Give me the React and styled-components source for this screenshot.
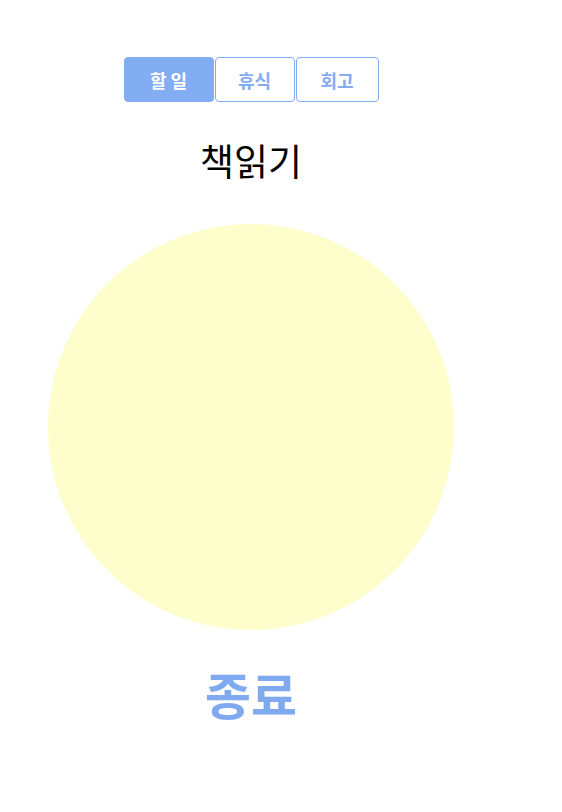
import React, { useState } from "react";
import styled, { createGlobalStyle } from "styled-components";

const Global = createGlobalStyle`
  body {
    margin: 8px;
    background: #ffffff;
    font-family: "Noto Sans CJK KR", "Noto Sans", sans-serif;
  }
`;

const Page = styled.div`
  width: 486px;
  display: flex;
  flex-direction: column;
  align-items: center;
  padding-top: 49px;
`;

const Tabs = styled.div`
  display: flex;
  gap: 1px;
`;

const Tab = styled.button`
  height: 45px;
  width: ${(p) => p.$w}px;
  border: 1px solid #82adf2;
  border-radius: 4px;
  background: ${(p) => (p.$active ? "#82adf2" : "#ffffff")};
  color: ${(p) => (p.$active ? "#ffffff" : "#82adf2")};
  font-family: "Noto Sans CJK KR", sans-serif;
  font-weight: 700;
  font-size: 18px;
  padding: 0;
  cursor: pointer;
`;

const Title = styled.h1`
  margin: 32px 0 0;
  font-size: 37px;
  font-weight: 400;
  line-height: 52px;
  color: #000;
`;

const Circle = styled.div`
  margin-top: 38px;
  width: 406px;
  height: 406px;
  border-radius: 50%;
  background: #fdfecc;
`;

const Stop = styled.button`
  margin-top: 30px;
  border: none;
  background: transparent;
  color: #80aaf0;
  font-family: "Noto Sans CJK KR", sans-serif;
  font-weight: 700;
  font-size: 50px;
  line-height: 66px;
  padding: 0;
  cursor: pointer;
`;

const tabs = [
  { label: "할 일", w: 90 },
  { label: "휴식", w: 80 },
  { label: "회고", w: 83 },
];

export default function App() {
  const [active, setActive] = useState(0);
  return (
    <>
      <Global />
      <Page>
        <Tabs>
          {tabs.map((t, i) => (
            <Tab key={t.label} $w={t.w} $active={i === active} onClick={() => setActive(i)}>
              {t.label}
            </Tab>
          ))}
        </Tabs>
        <Title>책읽기</Title>
        <Circle />
        <Stop>종료</Stop>
      </Page>
    </>
  );
}
